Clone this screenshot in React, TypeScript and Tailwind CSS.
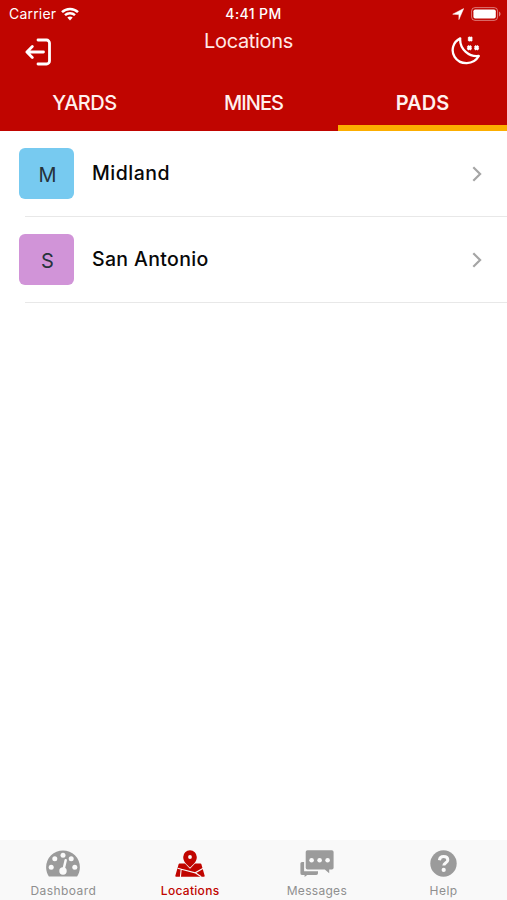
import type { ReactNode } from 'react';
import clsx from 'clsx';

interface Location {
  name: string;
  tile: string;
  text: string;
}

interface NavItem {
  label: string;
  icon: ReactNode;
  text: string;
}

const tabs = [
  { label: 'YARDS', text: 'tracking-[-0.45px]' },
  { label: 'MINES', text: 'tracking-[-0.95px]' },
  { label: 'PADS', text: 'tracking-[0.1px]' },
];
const activeTab = 'PADS';

const locations: Location[] = [
  { name: 'Midland', tile: 'bg-[#77caf0]', text: 'tracking-[0.5px]' },
  { name: 'San Antonio', tile: 'bg-[#d194d8]', text: 'tracking-[0.35px]' },
];

function WifiIcon() {
  return (
    <svg viewBox="0 0 18 14" className="h-[14px] w-[18px]" fill="none" stroke="currentColor" strokeWidth="2.5">
      <path d="M1 5.1C5.4.8 12.6.8 17 5.1" />
      <path d="M4 8.2c2.8-2.6 7.2-2.6 10 0" />
      <path d="M6.3 10.6c1.5-1.4 3.9-1.4 5.4 0L9 13.5z" fill="currentColor" stroke="none" />
    </svg>
  );
}

function LogoutIcon() {
  return (
    <svg viewBox="0 0 26 28" className="h-7 w-[26px]" fill="none" stroke="currentColor" strokeWidth="2.8" strokeLinecap="round" strokeLinejoin="round">
      <path d="M13 2h8.5a3 3 0 0 1 3 3v18a3 3 0 0 1-3 3H13" />
      <path d="M18.5 14H2M7.3 8.6 1.9 14l5.4 5.4" />
    </svg>
  );
}

// Crescent with three small sparkles in the opening
function MoonIcon() {
  return (
    <svg viewBox="0 0 30 30" className="h-[30px] w-[30px]" fill="none" stroke="currentColor" strokeWidth="2.3" strokeLinejoin="round">
      <path d="M9.2 2.4C2 6-.4 14.2 3.6 20.8c5.4 8.5 19 8.5 24.2-.8C18.6 21.3 8.4 13.4 9.2 2.4z" />
      <path d="m17.4 1.2 3.6 3.6m0-3.6-3.6 3.6M16.6 10l3.6 3.6m0-3.6-3.6 3.6M23.8 10l3.6 3.6m0-3.6-3.6 3.6" strokeWidth="2.5" />
    </svg>
  );
}

function ChevronIcon() {
  return (
    <svg viewBox="0 0 10 16" className="h-4 w-[10px] text-[#a5a5a5]" fill="none" stroke="currentColor" strokeWidth="2.2">
      <path d="m1.3 1.3 6.8 6.7-6.8 6.7" />
    </svg>
  );
}

function DashboardIcon() {
  return (
    <svg viewBox="0 0 34 27" className="h-[27px] w-[34px]">
      <path d="M2.9 26.5C1.2 23.8.1 21 .1 17.3a16.9 16.9 0 0 1 33.8 0c0 3.7-1.1 6.5-2.8 9.2z" fill="currentColor" />
      <g fill="#fafafa">
        <circle cx="5.2" cy="17.2" r="2.5" />
        <circle cx="8.8" cy="8.8" r="2.5" />
        <circle cx="17" cy="5.2" r="2.5" />
        <circle cx="25.2" cy="8.8" r="2.5" />
        <circle cx="28.8" cy="17.2" r="2.5" />
        <circle cx="17" cy="21" r="3.7" />
      </g>
      <path d="m17.3 20.5 2.4-10.2" stroke="#fafafa" strokeWidth="2.5" strokeLinecap="round" />
    </svg>
  );
}

function MapPinIcon() {
  return (
    <svg viewBox="0 0 30 27" className="h-[27px] w-[30px]" fill="currentColor">
      <path d="M4.6 13.6h20.8a1 1 0 0 1 1 .7l3.2 11.2a.9.9 0 0 1-.9 1.2H1.3a.9.9 0 0 1-.9-1.2l3.2-11.2a1 1 0 0 1 1-.7z" />
      <path d="M6.2 18.8 5.4 27M2.6 18.2l17.6 4.6 8-4.6M20.2 22.8l6 4" fill="none" stroke="#f9f9f9" strokeWidth="1.1" />
      <path
        fillRule="evenodd"
        d="M15 .2a6.8 6.8 0 0 1 6.8 6.8c0 4.8-3.7 7.6-6.8 10.6C11.9 14.6 8.2 11.8 8.2 7A6.8 6.8 0 0 1 15 .2zm0 4.9a1.9 1.9 0 1 0 0 3.8 1.9 1.9 0 0 0 0-3.8z"
        stroke="#f9f9f9"
        strokeWidth="1.6"
        paintOrder="stroke"
      />
    </svg>
  );
}

function MessagesIcon() {
  return (
    <svg viewBox="0 0 34 28" className="h-7 w-[34px]" fill="currentColor">
      <path d="M2 12h2.1v9.3H18v1.9a1.7 1.7 0 0 1-1.7 1.7H7.2L4.6 27v-2.1H2A1.7 1.7 0 0 1 .4 23v-9.4A1.6 1.6 0 0 1 2 12z" />
      <path d="M7.5.2h24.3a1.8 1.8 0 0 1 1.8 1.8v15.7a1.8 1.8 0 0 1-1.8 1.8h-2.6v3.8l-4.4-3.8H7.5a1.8 1.8 0 0 1-1.8-1.8V2A1.8 1.8 0 0 1 7.5.2z" />
      <g fill="#fafafa">
        <circle cx="11.6" cy="10.2" r="2.3" />
        <circle cx="19.6" cy="10.2" r="2.3" />
        <circle cx="27.6" cy="10.2" r="2.3" />
      </g>
    </svg>
  );
}

function HelpIcon() {
  return (
    <svg viewBox="0 0 27 27" className="h-[27px] w-[27px]">
      <circle cx="13.5" cy="13.5" r="13.2" fill="currentColor" />
      <path d="M9.4 10.2c.3-2.4 2-3.6 4.2-3.6 2.4 0 4.2 1.3 4.2 3.3 0 2.9-4 2.6-4 5.7" fill="none" stroke="#fafafa" strokeWidth="3" />
      <circle cx="13.7" cy="19.9" r="2.1" fill="#fafafa" />
    </svg>
  );
}

const navItems: NavItem[] = [
  { label: 'Dashboard', icon: <DashboardIcon />, text: 'tracking-[0.45px]' },
  { label: 'Locations', icon: <MapPinIcon />, text: 'tracking-[0.3px]' },
  { label: 'Messages', icon: <MessagesIcon />, text: 'tracking-[0.3px]' },
  { label: 'Help', icon: <HelpIcon />, text: 'tracking-[0.5px]' },
];

function StatusBar() {
  return (
    <div className="grid h-[27px] grid-cols-3 items-center px-[9px] text-[14px] leading-none">
      <div className="flex items-center gap-[5px]">
        <span className="tracking-[0.2px]">Carrier</span>
        <WifiIcon />
      </div>
      <span className="pt-px text-center text-[14px] font-medium tracking-[0.4px]">4:41 PM</span>
      <div className="flex items-center justify-end gap-[7px]">
        <svg viewBox="0 0 12 12" className="h-3 w-3" fill="currentColor">
          <path d="M11.7.6 6.9 11.6V6.6L.7 6.2z" stroke="currentColor" strokeWidth=".5" />
        </svg>
        <svg viewBox="0 0 30 14" className="-mr-[3px] h-[14px] w-[30px]">
          <rect x=".6" y=".6" width="26" height="12.8" rx="3.4" fill="none" stroke="#fff" strokeOpacity=".45" />
          <rect x="2.4" y="2.4" width="22.4" height="9.2" rx="1.8" fill="#fff" />
          <path d="M28 4.6c2 .8 2 4 0 4.8z" fill="#fff" fillOpacity=".5" />
        </svg>
      </div>
    </div>
  );
}

export default function App() {
  return (
    <div className="flex h-[900px] w-full flex-col overflow-hidden bg-white font-['Inter',sans-serif]">
      <header className="shrink-0 bg-[#c00500] text-white">
        <StatusBar />
        <div className="flex h-12 items-start justify-between pl-[25px] pr-[26px]">
          <button aria-label="Log out" className="mt-[11px]">
            <LogoutIcon />
          </button>
          <h1 className="mr-[5px] pt-px text-[20px] font-normal leading-[27px] tracking-[-0.35px] text-[#ffe9e7]">Locations</h1>
          <button aria-label="Toggle dark mode" className="mt-[9px]">
            <MoonIcon />
          </button>
        </div>
        <nav className="grid h-14 grid-cols-3 text-[20px]">
          {tabs.map(({ label, text }) => (
            <button
              key={label}
              className={clsx(
                'border-b-[6px] pt-[6px] text-[#fff0ee]',
                text,
                label === activeTab ? 'border-[#fcae00] font-semibold' : 'border-transparent font-medium',
              )}
            >
              {label}
            </button>
          ))}
        </nav>
      </header>

      <main className="flex-1">
        {locations.map(({ name, tile, text }) => (
          <div key={name} className="pl-[19px]">
            <div className="flex h-[85px] items-center pr-[25px]">
              <div className={clsx('flex h-[51px] w-[55px] items-center justify-center rounded-[6px] pl-[2px] pt-[3px] text-[20px] text-[#26333b]', tile)}>
                {name[0]}
              </div>
              <span className={clsx('ml-[18px] flex-1 text-[19.5px] font-[550] text-[#080808]', text)}>{name}</span>
              <ChevronIcon />
            </div>
            <div className="ml-[6px] h-px bg-[#e8e8e8]" />
          </div>
        ))}
      </main>

      <footer className="grid h-[60px] shrink-0 grid-cols-4 bg-[#f9f9f9]">
        {navItems.map(({ label, icon, text }) => (
          <button
            key={label}
            className={clsx(
              'flex flex-col items-center pt-[10px]',
              label === 'Locations' ? 'font-medium text-[#c00500]' : 'text-[#8f8f8f]',
            )}
          >
            <span className={clsx('h-7', label !== 'Locations' && 'text-[#9b9b9b]')}>{icon}</span>
            <span className={clsx('mt-[5px] text-[12px] leading-4', text)}>{label}</span>
          </button>
        ))}
      </footer>
    </div>
  );
}
